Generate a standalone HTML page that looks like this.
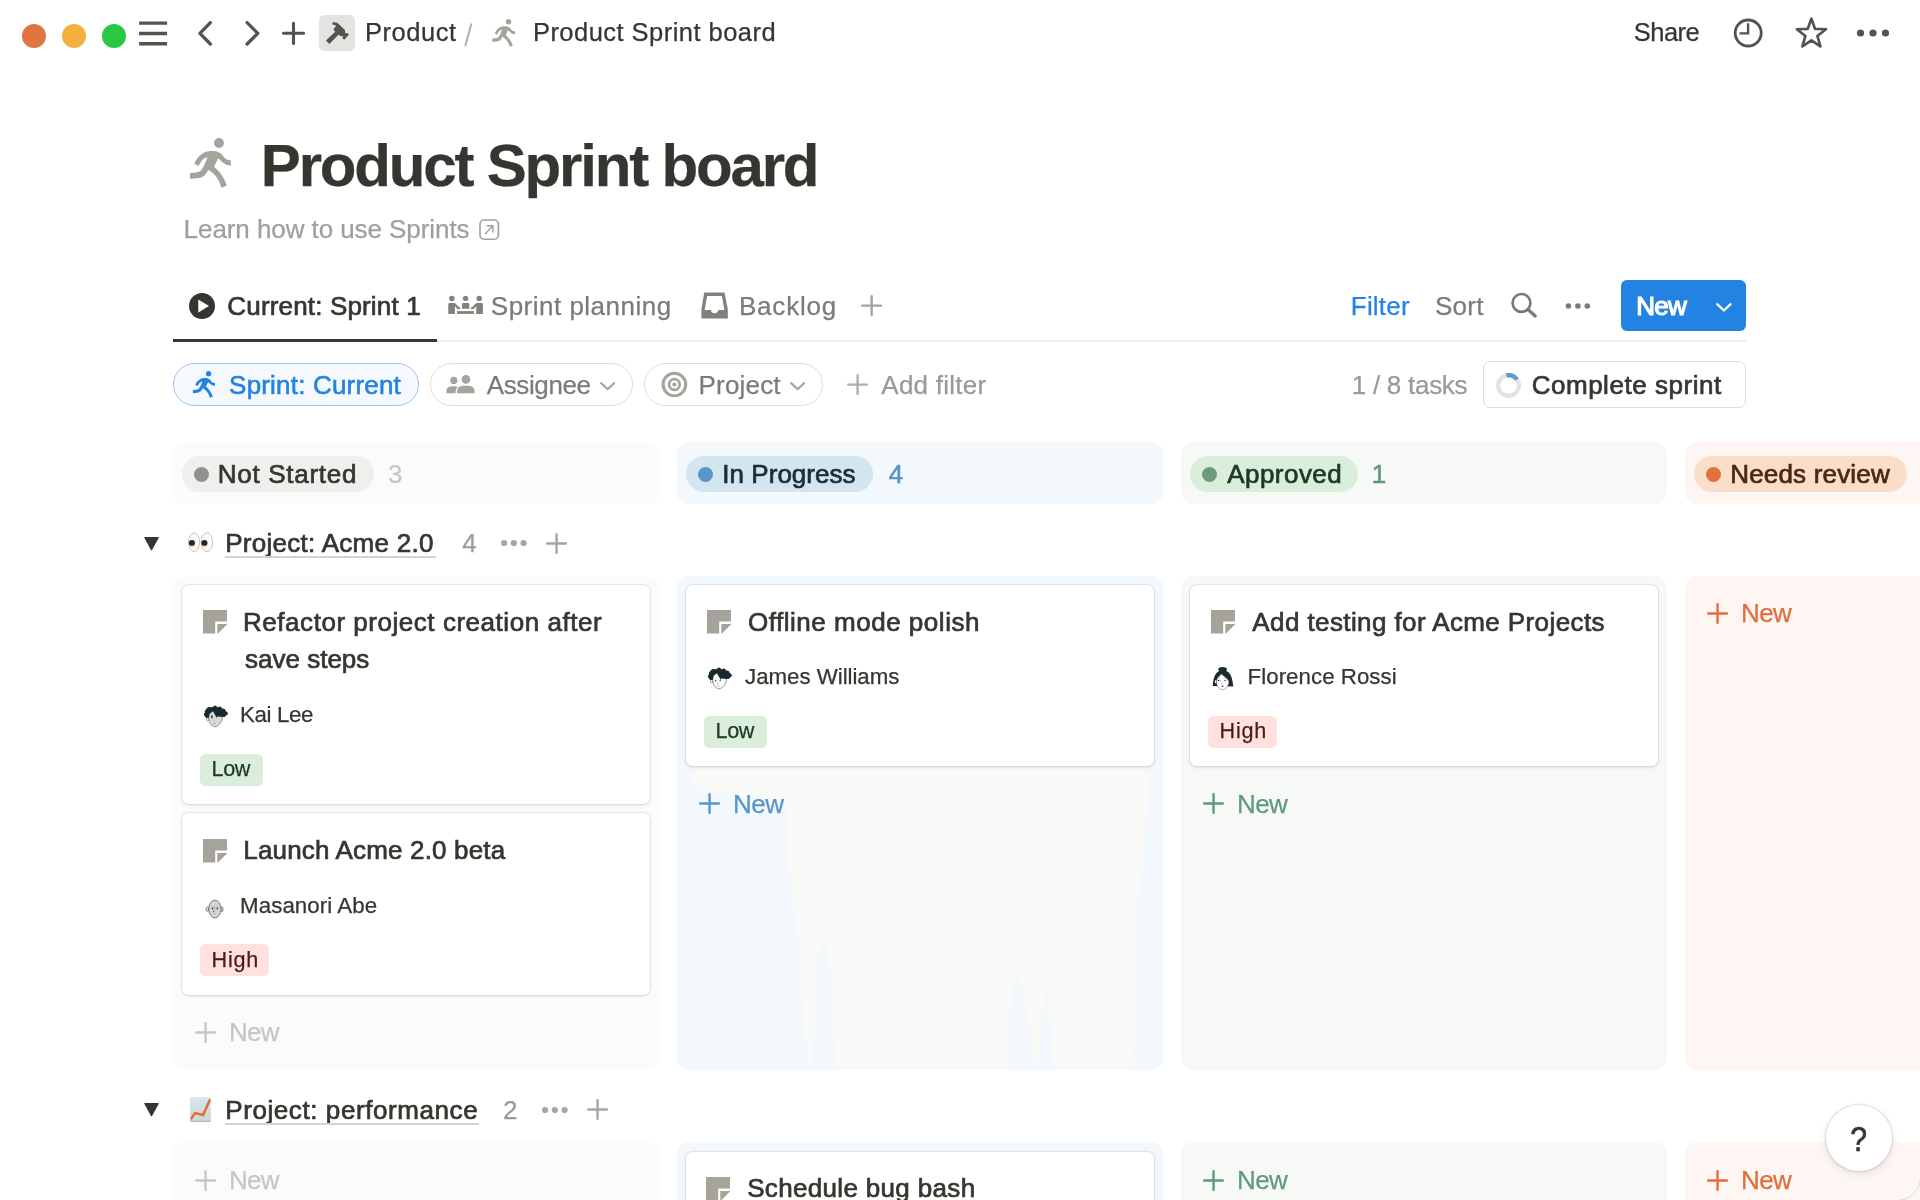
<!DOCTYPE html>
<html lang="en">
<head>
<meta charset="utf-8">
<title>Product Sprint board</title>
<style>
*{box-sizing:border-box;margin:0;padding:0}
html,body{width:1920px;height:1200px;overflow:hidden;background:#fff}
body{font-family:"Liberation Sans",sans-serif;color:#37352f;position:relative}
#app{position:absolute;left:0;top:0;width:1920px;height:1200px;overflow:hidden;background:#fff;will-change:transform}
.a{position:absolute}
.t{position:absolute;white-space:nowrap;line-height:1;-webkit-text-stroke:0.250px currentColor}
svg{position:absolute;overflow:visible}
/* top bar */
.tl{position:absolute;width:24px;height:24px;border-radius:50%;top:24px}
.tb{font-size:25.500px;color:#37352f}
/* columns */
.colh{position:absolute;top:442px;height:62px;width:486px;border-radius:12px}
.colb{position:absolute;width:486px;border-radius:12px}
.pill{position:absolute;top:456px;height:36px;border-radius:18px}
.dot{position:absolute;width:15px;height:15px;border-radius:50%;top:11px;left:12px}
.pt{font-size:26px;top:5px;left:37px;font-weight:400;-webkit-text-stroke:0.700px currentColor}
.cnt{font-size:26px;top:461px}
.card{position:absolute;width:468.250px;background:#fff;border-radius:7px;box-shadow:0 0 0 1.200px rgba(15,15,15,0.070),0 2px 3.500px rgba(15,15,15,0.070)}
.ct{font-size:26px;-webkit-text-stroke:0.700px currentColor;letter-spacing:0.45px}
.nm{font-size:22.300px}
.tag{position:absolute;height:32px;border-radius:5.500px;font-size:21.600px}
.low{background:#dbeddb;color:#1c3829}
.high{background:#ffe2dd;color:#4e1a14}
.nw{font-size:26px}
.gh{font-size:26px;-webkit-text-stroke:0.700px currentColor}
</style>
</head>
<body>
<div id="app">

<svg width="0" height="0" style="position:absolute"><defs>
<symbol id="runner" viewBox="0 0 41 50"><circle cx="29" cy="5" r="4.900" fill="currentColor"/><path fill="currentColor" d="M4.35 25.84C4.93 24.80 6.29 21.46 7.87 19.61C9.45 17.76 11.75 15.82 13.82 14.74C15.90 13.66 18.15 13.34 20.32 13.12C22.49 12.89 25.01 12.93 26.82 13.39C28.62 13.84 29.70 14.60 31.15 15.82C32.59 17.04 33.85 19.61 35.48 20.70C37.10 21.78 39.99 22.05 40.89 22.32L40.89 27.46C40.08 27.28 37.46 26.97 36.02 26.38C34.58 25.79 33.54 24.98 32.23 23.94C30.92 22.91 28.85 20.79 28.17 20.15L24.11 28.82C25.10 29.81 28.35 32.61 30.06 34.77C31.78 36.94 33.27 39.69 34.40 41.81C35.52 43.93 36.43 46.55 36.83 47.50L31.42 49.66C30.92 48.44 29.75 44.65 28.44 42.35C27.13 40.05 25.24 37.61 23.57 35.85C21.90 34.10 19.28 32.47 18.42 31.79L18.42 31.79C17.84 32.65 16.30 35.63 14.91 36.94C13.51 38.25 12.51 39.01 10.03 39.64C7.55 40.28 1.69 40.55 0.02 40.73L0.02 35.04C1.51 34.82 6.83 34.55 8.95 33.69C11.07 32.83 11.66 31.43 12.74 29.90C13.82 28.37 14.63 26.33 15.45 24.49C16.26 22.64 17.25 19.75 17.61 18.80L17.61 18.80C16.71 19.34 13.69 20.51 12.20 22.05C10.71 23.58 9.27 27.01 8.68 28.00Z"/></symbol>
<symbol id="pg" viewBox="0 0 24 24"><path fill="currentColor" d="M0 0H24V11.600H12.200V23.600H0Z"/><path fill="currentColor" d="M14.300 13.900H24V14.600L15 23.600H14.300Z"/></symbol>
<symbol id="plus" viewBox="0 0 22 22"><path d="M11 1.300V20.700M1.300 11H20.700" stroke="currentColor" stroke-width="2.500" stroke-linecap="round" fill="none"/></symbol>
<symbol id="chev" viewBox="0 0 16 9"><path d="M1.200 1.200L8 7.600L14.800 1.200" stroke="currentColor" stroke-width="2.300" fill="none" stroke-linecap="round" stroke-linejoin="round"/></symbol>
</defs></svg>
<!-- TOPBAR -->
<div id="topbar">
<div class="tl" style="left:22px;background:#e07542"></div>
<div class="tl" style="left:62px;background:#f2b13f"></div>
<div class="tl" style="left:102px;background:#28c840"></div>
<svg style="left:0;top:0" width="1920" height="70" viewBox="0 0 1920 70" fill="none" stroke="#55534e" stroke-width="3" stroke-linecap="round" stroke-linejoin="round">
<!-- hamburger -->
<path d="M139.100 23.100H167.100 M139.100 33.500H167.100 M139.100 43.700H167.100" stroke-linecap="butt" stroke-width="3.400"/>
<!-- back / forward -->
<path d="M210.400 22.600L199.900 33.300L210.400 44" stroke-width="3.300"/>
<path d="M247.100 22.600L257.800 33.300L247.100 44" stroke-width="3.300"/>
<!-- plus -->
<path d="M293.500 23.300V43.400M283.500 33.300H303.600" stroke-width="3.100"/>
<!-- hammer box -->
<rect x="319" y="15" width="36" height="36" rx="5.500" fill="#e4e3e1" stroke="none"/>
<g id="hammer" fill="#55534e" stroke="none"><path d="M325.930 40.450L329.300 43.930L338.470 34.840L340.670 35.940L342.870 36.300L342.690 38.500L344.340 39.790L348.920 34.470L347.270 33L345.250 33.190L344.890 30.070L338.470 23.650Q336.500 21.900 332.420 22.300L332.420 24.380Q335 24.500 336.270 26.030L333.340 29.330L334.440 30.430L334.990 31.900Z"/></g>
<!-- clock -->
<circle cx="1748.200" cy="33" r="13" stroke-width="2.800"/>
<path d="M1748.100 24.300V33.400H1740.500" stroke-width="2.400" stroke-linecap="round" stroke-linejoin="miter"/>
<!-- star -->
<path d="M1811.40 18.70L1815.10 28.90L1825.95 29.27L1817.39 35.95L1820.39 46.38L1811.40 40.30L1802.41 46.38L1805.41 35.95L1796.85 29.27L1807.70 28.90Z" stroke-width="2.700" stroke-linejoin="round"/>
<!-- dots -->
<g fill="#55534e" stroke="none"><circle cx="1860.500" cy="33" r="3.600"/><circle cx="1873" cy="33" r="3.600"/><circle cx="1885.500" cy="33" r="3.600"/></g>
</svg>
<span class="t tb" id="tbp" style="left:365.03px;top:20.02px;letter-spacing:0.542px">Product</span>
<svg style="left:460px;top:20px" width="16" height="30" viewBox="460 20 16 30"><path d="M471.400 23.400L465.300 46" stroke="#b3b2ae" stroke-width="2.100" fill="none"/></svg>
<span class="t tb" id="tbt" style="left:532.93px;top:20.02px;letter-spacing:0.466px">Product Sprint board</span>
<span class="t tb" id="tbs" style="left:1633.73px;top:20.02px;letter-spacing:-0.503px">Share</span>
<svg id="run1" style="left:491.500px;top:18.500px;color:#a6a39b" width="23.500" height="28"><use href="#runner"/></svg>
</div>

<!-- TITLE -->
<div id="title">
<svg style="left:190px;top:138px;color:#a6a39b" width="41" height="50"><use href="#runner"/></svg>
<span class="t" id="h1" style="left:260.83px;top:135.61px;font-size:60px;font-weight:700;letter-spacing:-2.174px;color:#37352f">Product Sprint board</span>
<span class="t" id="sub" style="left:183.62px;top:215.79px;font-size:26px;letter-spacing:-0.072px;color:#a09f9b">Learn how to use Sprints</span>
<svg style="left:479px;top:219px" width="21" height="22" viewBox="479 219 21 22" fill="none" stroke="#a09f9b" stroke-width="1.600"><rect x="480" y="220" width="18.400" height="19.200" rx="4.200"/><path d="M485.500 233.500L492.500 226.300M487 225.800H492.900V232" stroke-linecap="round" stroke-linejoin="round" stroke-width="1.500"/></svg>
</div>

<!-- TABS -->
<div id="tabs">
<div class="a" style="left:173px;top:340px;width:1573px;height:2px;background:#ececea"></div>
<div class="a" style="left:173px;top:338.800px;width:264px;height:3.200px;background:#37352f"></div>
<!-- play icon -->
<svg style="left:188.500px;top:292.500px" width="26" height="26" viewBox="0 0 26 26"><circle cx="13" cy="13" r="13" fill="#37352f"/><path d="M9.300 6.600L20 13L9.300 19.400Z" fill="#fff"/></svg>
<span class="t" id="tab1" style="left:227.35px;top:292.99px;font-size:26px;letter-spacing:0.157px;-webkit-text-stroke:0.700px currentColor">Current: Sprint 1</span>
<!-- sprint planning icon -->
<svg style="left:444px;top:290px" width="44" height="30" viewBox="444 290 44 30" fill="#83817c"><circle cx="451.900" cy="298.400" r="2.750"/><circle cx="465.550" cy="298.400" r="2.650"/><circle cx="479.250" cy="298.400" r="2.750"/><path d="M448.250 304.300Q448.250 303 449.600 303H454Q455.200 303 456 303.900L458.200 306.500Q458.900 307.200 459.700 307.200Q460.500 307.300 460.300 308.300Q460 309.400 458.700 309.300Q457.600 309.200 456.800 308.300L454.900 306.300V313.900H448.250Z"/><path d="M482.900 304.300 Q482.900 303.000 481.550 303.000 H477.150 Q475.950 303.000 475.150 303.900 L472.950 306.500 Q472.250 307.200 471.450 307.200 Q470.650 307.300 470.850 308.300 Q471.150 309.400 472.450 309.300 Q473.550 309.200 474.350 308.300 L476.250 306.300 V313.900 H482.900 Z"/><path d="M462 304.200Q462 303 463.300 303H468Q469.250 303 469.250 304.200V308.750H462Z"/><rect x="457" y="311.100" width="16.900" height="2.800"/></svg>
<span class="t" id="tab2" style="left:490.83px;top:292.99px;font-size:26px;color:#7d7b76;letter-spacing:0.490px">Sprint planning</span>
<!-- backlog icon -->
<svg style="left:696px;top:288px" width="38" height="36" viewBox="696 288 38 36" fill="#83817c"><path fill-rule="evenodd" d="M704.250 292.500H724.500L727.800 309.300V318.600H701.400V309.300Z M707.100 295.950H721.950L724.350 310.050H718.350Q717.600 313.300 714.600 313.300Q711.600 313.300 710.850 310.050H704.700Z"/></svg>
<span class="t" id="tab3" style="left:738.93px;top:292.99px;font-size:26px;color:#7d7b76;letter-spacing:0.819px">Backlog</span>
<svg style="left:860.800px;top:294.600px;color:#a6a39b" width="21.300" height="21.300"><use href="#plus"/></svg>
<span class="t" id="filter" style="left:1350.83px;top:292.99px;font-size:26px;color:#2383e2;letter-spacing:0.186px">Filter</span>
<span class="t" id="sort" style="left:1435.03px;top:292.99px;font-size:26px;color:#7d7b76;letter-spacing:0.230px">Sort</span>
<svg style="left:1506px;top:288px" width="34" height="34" viewBox="1506 288 34 34" fill="none" stroke="#7b7974"><circle cx="1521.500" cy="302.900" r="8.900" stroke-width="2.700"/><path d="M1528.200 309.800L1535.200 316" stroke-width="3.300" stroke-linecap="round"/></svg>
<svg style="left:1565px;top:301.500px" width="26" height="8" viewBox="0 0 26 8" fill="#7b7974"><circle cx="3.400" cy="4" r="2.800"/><circle cx="12.900" cy="4" r="2.800"/><circle cx="22.300" cy="4" r="2.800"/></svg>
<div class="a" style="left:1621px;top:280px;width:125px;height:51px;border-radius:6px;background:#2383e2"></div>
<span class="t" id="newb" style="left:1636.20px;top:292.89px;font-size:26px;color:#fff;-webkit-text-stroke:1.200px currentColor;letter-spacing:-0.718px">New</span>
<svg style="left:1716.100px;top:302.700px;color:#fff" width="15.800" height="8.900"><use href="#chev"/></svg>
</div>

<!-- FILTERS -->
<div id="filters">
<div class="a" style="left:173px;top:363px;width:245.800px;height:42.700px;border-radius:22px;background:#f5f9fe;border:1.300px solid #9fc6f0"></div>
<svg style="left:191.500px;top:371px;color:#2383e2" width="24" height="27"><use href="#runner"/></svg>
<span class="t" id="f1" style="left:229.10px;top:371.60px;font-size:26px;color:#2383e2;-webkit-text-stroke:0.600px currentColor;letter-spacing:0.190px">Sprint: Current</span>
<div class="a" style="left:430.200px;top:363px;width:202.500px;height:42.700px;border-radius:22px;background:#fff;border:1.300px solid #dddcd9"></div>
<svg style="left:440px;top:370px" width="40" height="28" viewBox="440 370 40 28" fill="#a6a39b"><circle cx="453.800" cy="380.400" r="3.600"/><path d="M446.400 393.200V391.500Q446.400 386.500 451.500 386.300H455.500Q456.800 386.300 457.600 386.900Q455.600 388.800 455.600 391.500V393.200Z"/><circle cx="466" cy="379.400" r="4.300"/><path d="M457 393.200V391.800Q457 385.800 463 385.800H469Q474.600 385.800 474.600 391.800V393.200Z"/></svg>
<span class="t" id="f2" style="left:486.73px;top:371.60px;font-size:26px;color:#7d7b76;letter-spacing:-0.378px">Assignee</span>
<svg style="left:599.500px;top:381.700px;color:#a9a6a0" width="15.300" height="8.600"><use href="#chev"/></svg>
<div class="a" style="left:644.300px;top:363px;width:178.500px;height:42.700px;border-radius:22px;background:#fff;border:1.300px solid #dddcd9"></div>
<svg style="left:658px;top:368px" width="34" height="34" viewBox="658 368 34 34" fill="none" stroke="#a6a39b"><circle cx="674.400" cy="384.500" r="11.300" stroke-width="3.100"/><circle cx="674.400" cy="384.500" r="5.300" stroke-width="2.700"/><circle cx="674.400" cy="384.500" r="2.100" fill="#a6a39b" stroke="none"/></svg>
<span class="t" id="f3" style="left:698.53px;top:371.60px;font-size:26px;color:#7d7b76;letter-spacing:0.192px">Project</span>
<svg style="left:790.400px;top:381.700px;color:#a9a6a0" width="15.300" height="8.600"><use href="#chev"/></svg>
<svg style="left:846.800px;top:373.800px;color:#b3b0aa" width="21.200" height="21.200"><use href="#plus"/></svg>
<span class="t" id="f4" style="left:881.33px;top:371.60px;font-size:26px;color:#9b9994;letter-spacing:0.234px">Add filter</span>
<span class="t" id="f5" style="left:1351.83px;top:371.60px;font-size:26px;color:#9b9994;letter-spacing:-0.275px">1 / 8 tasks</span>
<div class="a" style="left:1483.200px;top:361px;width:262.800px;height:46.800px;border-radius:7px;background:#fff;border:1.400px solid #dddcd9"></div>
<svg style="left:1496px;top:372.800px" width="25" height="25" viewBox="0 0 25 25" fill="none" stroke-width="4.200"><circle cx="12.500" cy="12.500" r="10.400" stroke="#e4e3e1"/><path d="M10.340 2.330A10.400 10.400 0 0 1 21.020 6.530" stroke="#5b9ad2"/></svg>
<span class="t" id="f6" style="left:1531.65px;top:371.60px;font-size:26px;color:#37352f;-webkit-text-stroke:0.700px currentColor;letter-spacing:0.532px">Complete sprint</span>
</div>

<!-- BOARD -->
<div id="board">
<div class="colh" style="left:173px;background:#fbfbfa"></div>
<div class="colh" style="left:677px;background:#f3f8fc"></div>
<div class="colh" style="left:1181px;background:#f6f9f6"></div>
<div class="colh" style="left:1685px;background:#fdf6f3"></div>
<div class="colb" style="left:173px;top:576px;height:493.500px;background:#fbfbfa"></div>
<div class="colb" style="left:173px;top:1142px;height:200px;background:#fbfbfa"></div>
<div class="colb" style="left:677px;top:576px;height:493.500px;background:#f3f8fc"></div>
<div class="colb" style="left:677px;top:1142px;height:200px;background:#f3f8fc"></div>
<div class="colb" style="left:1181px;top:576px;height:493.500px;background:#f6f9f6"></div>
<div class="colb" style="left:1181px;top:1142px;height:200px;background:#f6f9f6"></div>
<div class="colb" style="left:1685px;top:576px;height:493.500px;background:#fdf6f3"></div>
<div class="colb" style="left:1685px;top:1142px;height:200px;background:#fdf6f3"></div>
<svg id="dz" style="left:677px;top:760px" width="486" height="310" viewBox="677 760 486 310"><path fill="#f9f9f8" d="M693 767H1150L1147.300 813L1142 867L1136.700 920L1134 973L1133.200 1069.500H1051.300L1051.300 1026.700L1046 978.700L1040.700 1026.700L1038 1069.500H1034L1030 1026.700L1024.700 1000L1015.300 965.300L1011.300 1000L1010 1026.700V1069.500H836.700L834 1026.700L830 973L824.700 922.700L815.300 973L814 1026.700L811.300 1069.500H807.300L804.700 1026.700L800.700 973L796.100 920L792.700 893.300L788.100 866.700V802L740 796L693 790Z"/></svg>
<div class="pill" style="left:182px;width:191.5px;background:#f0efee"><div class="dot" style="background:#91918e"></div><span class="t pt" id="p1" style="left:35.76px;top:4.91px;color:#37352f;letter-spacing:0.715px">Not Started</span></div>
<span class="t cnt" id="c1" style="left:388.12px;color:#c7c6c4;letter-spacing:0.000px">3</span>
<div class="pill" style="left:686px;width:187px;background:#d3e5ef"><div class="dot" style="background:#5a96c8"></div><span class="t pt" id="p2" style="left:36.35px;top:4.91px;color:#1a2e3a;letter-spacing:0.025px">In Progress</span></div>
<span class="t cnt" id="c2" style="left:888.80px;color:#5596cb;letter-spacing:0.000px;-webkit-text-stroke:0.600px currentColor">4</span>
<div class="pill" style="left:1190px;width:168px;background:#dbeddb"><div class="dot" style="background:#6c9b7d"></div><span class="t pt" id="p3" style="left:37.26px;top:4.80px;color:#1c3829;letter-spacing:0.451px">Approved</span></div>
<span class="t cnt" id="c3" style="left:1371.80px;color:#5f9b7a;letter-spacing:0.000px;-webkit-text-stroke:0.600px currentColor">1</span>
<div class="pill" style="left:1694px;width:213px;background:#fadec9"><div class="dot" style="background:#e0733d"></div><span class="t pt" id="p4" style="left:36.26px;top:4.91px;color:#49290e;letter-spacing:0.179px">Needs review</span></div>
<svg style="left:144.400px;top:537.100px" width="15" height="13.300" viewBox="0 0 15 13.300"><path d="M1 0H14Q15.300 0 14.600 1.100L8.200 12.700Q7.500 13.800 6.800 12.700L0.400 1.100Q-0.300 0 1 0Z" fill="#37352f"/></svg>
<svg id="eyes" style="left:186px;top:530px" width="30" height="24" viewBox="186 530 30 24"><ellipse cx="194.050" cy="542.200" rx="5.600" ry="9.400" fill="#fafaf9" stroke="#bdbbb6" stroke-width="0.800"/><ellipse cx="206.850" cy="542.200" rx="5.800" ry="9.400" fill="#fafaf9" stroke="#bdbbb6" stroke-width="0.800"/><circle cx="191.900" cy="543.100" r="3.100" fill="#2b2622"/><circle cx="204.400" cy="543.100" r="3.100" fill="#2b2622"/><path d="M189.600 545.200A3.100 3.100 0 0 0 194.400 545Z" fill="#c8621f"/><path d="M202.100 545.200A3.100 3.100 0 0 0 206.900 545Z" fill="#c8621f"/></svg>
<span class="t gh" id="g1" style="left:225.26px;top:530.24px;letter-spacing:0.276px">Project: Acme 2.0</span>
<div class="a" style="left:225px;top:556.300px;width:211px;height:1.300px;background:#d4d3d0"></div>
<span class="t" id="g1c" style="left:462.23px;top:530.24px;font-size:26px;color:#9b9a97;letter-spacing:0.000px">4</span>
<svg style="left:500.650px;top:539.400px" width="26" height="8" viewBox="0 0 26 8" fill="#a8a59f"><circle cx="3.100" cy="4" r="3.100"/><circle cx="12.850" cy="4" r="3.100"/><circle cx="22.600" cy="4" r="3.100"/></svg>
<svg style="left:545.900px;top:532.700px;color:#a8a59f" width="21.100" height="21.100"><use href="#plus"/></svg>
<svg style="left:144.400px;top:1103.100px" width="15" height="13.300" viewBox="0 0 15 13.300"><path d="M1 0H14Q15.300 0 14.600 1.100L8.200 12.700Q7.500 13.800 6.800 12.700L0.400 1.100Q-0.300 0 1 0Z" fill="#37352f"/></svg>
<svg id="chart" style="left:188px;top:1095px" width="26" height="30" viewBox="188 1095 26 30"><defs><linearGradient id="cg" x1="0" y1="0" x2="0" y2="1"><stop offset="0" stop-color="#d9e6ee"/><stop offset="1" stop-color="#c9d8d3"/></linearGradient></defs><rect x="190" y="1097.100" width="20.900" height="24.800" fill="url(#cg)"/><rect x="190" y="1120.700" width="20.900" height="1.200" fill="#bdbab4"/><path d="M190.900 1119.400L195 1113.100L203.100 1115L210 1099.400" fill="none" stroke="#e8693a" stroke-width="2.400" stroke-linejoin="miter"/></svg>
<span class="t gh" id="g2" style="left:225.26px;top:1096.74px;letter-spacing:0.581px">Project: performance</span>
<div class="a" style="left:225px;top:1123.400px;width:253.500px;height:1.300px;background:#d4d3d0"></div>
<span class="t" id="g2c" style="left:503.12px;top:1096.74px;font-size:26px;color:#9b9a97;letter-spacing:0.000px">2</span>
<svg style="left:541.500px;top:1105.900px" width="26" height="8" viewBox="0 0 26 8" fill="#a8a59f"><circle cx="3.100" cy="4" r="3.100"/><circle cx="12.850" cy="4" r="3.100"/><circle cx="22.600" cy="4" r="3.100"/></svg>
<svg style="left:586.800px;top:1099.200px;color:#a8a59f" width="21.100" height="21.100"><use href="#plus"/></svg>
<div class="card" style="left:182px;top:585px;height:219.25px">
<svg style="left:20.599999999999994px;top:25.40px;color:#a6a39b" width="24" height="24"><use href="#pg"/></svg>
<span class="t ct" id="k1t0" style="left:61.06px;top:23.69px;letter-spacing:0.535px">Refactor project creation after</span>
<span class="t ct" id="k1t1" style="left:63.06px;top:60.60px;letter-spacing:0.000px">save steps</span>
<div class="a" style="left:16px;top:115px;width:36px;height:32px"><svg width="36" height="32" viewBox="0 0 36 32" style="left:0;top:0"><ellipse cx="9.700" cy="19" rx="1.300" ry="1.900" fill="#f2f2f1" stroke="#6f6f6d" stroke-width="0.600"/><path d="M11.300 13C10.500 17 10.900 21 11.900 23C13.300 25.600 15.500 26.800 17.100 26.800C19 26.800 21.300 24.800 22.900 22.200C24 20.400 24.700 18.500 24.300 16.500L15 10.500Z" fill="#dbdad8" stroke="#6f6f6d" stroke-width="0.700"/><ellipse cx="13.900" cy="16.800" rx="0.800" ry="1.700" fill="#2b2b2b"/><circle cx="16.100" cy="20.100" r="0.700" fill="#9a9997"/><ellipse cx="16.500" cy="23.300" rx="0.900" ry="0.600" fill="#8f8e8c"/><g fill="#1a2b2f"><polygon points="8.800 8 17 6.500 26.700 9.100 29.600 13.900 26.700 17.100 22 16.800 19.200 16.500 18.700 18.100 17.100 14.900 14.900 11.200 11.500 13.900 10.700 18.100 8 17.600 6.400 14.400"/><circle cx="11.2" cy="8.8" r="1.9"/><circle cx="17.1" cy="7.5" r="1.9"/><circle cx="21.9" cy="8.3" r="1.9"/><circle cx="25.3" cy="10.4" r="1.7"/><circle cx="28" cy="13.3" r="1.8"/><circle cx="8" cy="14.4" r="2.1"/><circle cx="8.8" cy="11.2" r="1.9"/><circle cx="9" cy="16.5" r="1.6"/></g></svg></div>
<span class="t nm" id="k1n" style="left:58.12px;top:118.89px;letter-spacing:-0.395px">Kai Lee</span>
<div class="tag low" style="left:18px;top:169.10px;width:63.1px;height:31.9px"><span class="t" id="k1g" style="left:11.62px;top:4.14px;letter-spacing:-0.434px">Low</span></div>
</div>
<div class="card" style="left:182px;top:813px;height:181.5px">
<svg style="left:20.599999999999994px;top:26.10px;color:#a6a39b" width="24" height="24"><use href="#pg"/></svg>
<span class="t ct" id="k2t0" style="left:61.35px;top:23.91px;letter-spacing:0.162px">Launch Acme 2.0 beta</span>
<div class="a" style="left:16px;top:79px;width:36px;height:32px"><svg width="36" height="32" viewBox="0 0 36 32" style="left:0;top:0"><ellipse cx="9.400" cy="17.200" rx="1.400" ry="2.300" fill="#dcdbd9" stroke="#666" stroke-width="0.700"/><ellipse cx="23.900" cy="17.300" rx="1.300" ry="2.400" fill="#dcdbd9" stroke="#666" stroke-width="0.700"/><ellipse cx="16.900" cy="17" rx="6.200" ry="8.900" fill="#d4d3d1" stroke="#5e5e5c" stroke-width="0.800"/><path d="M13 15H15.300M18 15H20.500" stroke="#888" stroke-width="0.500"/><path d="M16.300 14V19.500" stroke="#8a8a88" stroke-width="0.600"/><circle cx="14.400" cy="16.600" r="0.800" fill="#2b2b2b"/><circle cx="19.300" cy="16.500" r="0.800" fill="#2b2b2b"/><circle cx="15.500" cy="19.400" r="0.500" fill="#444"/><path d="M15 21.300Q16.300 23 17.700 21.300" stroke="#888" stroke-width="0.600" fill="#e6e5e3"/></svg></div>
<span class="t nm" id="k2n" style="left:58.12px;top:81.64px;letter-spacing:0.053px">Masanori Abe</span>
<div class="tag high" style="left:18px;top:131.40px;width:69px;height:32px"><span class="t" id="k2g" style="left:11.62px;top:4.94px;letter-spacing:0.783px">High</span></div>
</div>
<div class="card" style="left:686px;top:585px;height:180.5px">
<svg style="left:20.600000000000023px;top:25.40px;color:#a6a39b" width="24" height="24"><use href="#pg"/></svg>
<span class="t ct" id="k3t0" style="left:61.96px;top:23.69px;letter-spacing:0.520px">Offline mode polish</span>
<div class="a" style="left:16px;top:77px;width:36px;height:32px"><svg width="36" height="32" viewBox="0 0 36 32" style="left:0;top:0"><ellipse cx="9.700" cy="19" rx="1.300" ry="1.900" fill="#f2f2f1" stroke="#6f6f6d" stroke-width="0.600"/><path d="M11.300 13C10.500 17 10.900 21 11.900 23C13.300 25.600 15.500 26.800 17.100 26.800C19 26.800 21.300 24.800 22.900 22.200C24 20.400 24.700 18.500 24.300 16.500L15 10.500Z" fill="#ffffff" stroke="#6f6f6d" stroke-width="0.700"/><ellipse cx="13.700" cy="18.800" rx="1" ry="0.700" fill="#555" transform="rotate(-30 13.700 18.800)"/><ellipse cx="18.300" cy="18.500" rx="1" ry="0.700" fill="#666" transform="rotate(-30 18.300 18.500)"/><circle cx="15.600" cy="21.300" r="0.600" fill="#8a8a88"/><path d="M14.600 23.300L16.400 24.200L17.600 23.300" stroke="#777" stroke-width="0.500" fill="none"/><g fill="#1a2b2f"><polygon points="8.800 8 17 6.500 26.700 9.100 29.600 13.900 26.700 17.100 22 16.800 19.200 16.500 18.700 18.100 17.100 14.900 14.900 11.200 11.500 13.900 10.700 18.100 8 17.600 6.400 14.400"/><circle cx="11.2" cy="8.8" r="1.9"/><circle cx="17.1" cy="7.5" r="1.9"/><circle cx="21.9" cy="8.3" r="1.9"/><circle cx="25.3" cy="10.4" r="1.7"/><circle cx="28" cy="13.3" r="1.8"/><circle cx="8" cy="14.4" r="2.1"/><circle cx="8.8" cy="11.2" r="1.9"/><circle cx="9" cy="16.5" r="1.6"/></g></svg></div>
<span class="t nm" id="k3n" style="left:59.12px;top:80.89px;letter-spacing:-0.042px">James Williams</span>
<div class="tag low" style="left:18px;top:131.25px;width:63px;height:31.6px"><span class="t" id="k3g" style="left:11.62px;top:4.22px;letter-spacing:-0.384px">Low</span></div>
</div>
<div class="card" style="left:1190px;top:585px;height:180.5px">
<svg style="left:20.59999999999991px;top:25.40px;color:#a6a39b" width="24" height="24"><use href="#pg"/></svg>
<span class="t ct" id="k4t0" style="left:62.35px;top:23.69px;letter-spacing:0.397px">Add testing for Acme Projects</span>
<div class="a" style="left:15px;top:77px;width:36px;height:32px"><svg width="36" height="32" viewBox="0 0 36 32" style="left:0;top:0"><path d="M7.700 23.900C8.300 15.500 10.500 10.500 14.300 9L13.300 7.800Q13 5.200 17.500 5.100Q22 5.200 22 7.800L21.300 9C25.500 10.500 27.500 16 28.300 24.600Z" fill="#1a2b2f"/><path d="M16.500 12C14 14.500 11.500 16 11.500 20C11.500 24.500 14.500 27.700 17.500 27.700C20.500 27.700 23.500 24.500 24 20C23.500 17 20 15.500 16.500 12Z" fill="#fff" stroke="#555" stroke-width="0.500"/><ellipse cx="10.600" cy="19.700" rx="0.700" ry="1.600" fill="#fff"/><circle cx="13.600" cy="18.500" r="0.800" fill="#1a2b2f"/><ellipse cx="15.200" cy="18.600" rx="0.700" ry="0.500" fill="#999"/><ellipse cx="20.200" cy="18.400" rx="1.300" ry="0.600" fill="#777" transform="rotate(-20 20.200 18.400)"/><path d="M14 16.500L15 16.200M19 16.200L20.500 16.600" stroke="#999" stroke-width="0.500"/><circle cx="16.700" cy="21.300" r="0.600" fill="#999"/><ellipse cx="17.500" cy="24.200" rx="1.200" ry="0.600" fill="#333" transform="rotate(-20 17.500 24.200)"/></svg></div>
<span class="t nm" id="k4n" style="left:57.62px;top:80.89px;letter-spacing:0.024px">Florence Rossi</span>
<div class="tag high" style="left:18px;top:131.25px;width:69px;height:31.6px"><span class="t" id="k4g" style="left:11.62px;top:4.22px;letter-spacing:0.783px">High</span></div>
</div>
<div class="card" style="left:686px;top:1151.600px;height:181px">
<svg style="left:20.400px;top:25.500px;color:#a6a39b" width="24" height="24"><use href="#pg"/></svg>
<span class="t ct" id="k5t0" style="left:61.15px;top:23.40px;letter-spacing:0.333px">Schedule bug bash</span>
</div>
<svg style="left:195px;top:1021.6px;color:#c6c6c4" width="21.100" height="21.100"><use href="#plus"/></svg><span class="t nw" id="n1" style="left:229.03px;top:1018.69px;color:#c6c6c4;letter-spacing:-0.693px">New</span>
<svg style="left:698.9px;top:792.8px;color:#5596cb" width="21.100" height="21.100"><use href="#plus"/></svg><span class="t nw" id="n2" style="left:732.93px;top:790.69px;color:#5596cb;letter-spacing:-0.493px">New</span>
<svg style="left:1202.8px;top:792.8px;color:#5f9b7a" width="21.100" height="21.100"><use href="#plus"/></svg><span class="t nw" id="n3" style="left:1237.03px;top:790.69px;color:#5f9b7a;letter-spacing:-0.593px">New</span>
<svg style="left:1706.9px;top:602.8px;color:#e06e3c" width="21.100" height="21.100"><use href="#plus"/></svg><span class="t nw" id="n4" style="left:1740.93px;top:599.89px;color:#e06e3c;letter-spacing:-0.543px">New</span>
<svg style="left:195px;top:1169.9px;color:#c6c6c4" width="21.100" height="21.100"><use href="#plus"/></svg><span class="t nw" id="n5" style="left:229.03px;top:1166.99px;color:#c6c6c4;letter-spacing:-0.693px">New</span>
<svg style="left:1202.8px;top:1169.9px;color:#5f9b7a" width="21.100" height="21.100"><use href="#plus"/></svg><span class="t nw" id="n6" style="left:1237.03px;top:1166.99px;color:#5f9b7a;letter-spacing:-0.593px">New</span>
<svg style="left:1706.9px;top:1169.9px;color:#e06e3c" width="21.100" height="21.100"><use href="#plus"/></svg><span class="t nw" id="n7" style="left:1740.93px;top:1166.99px;color:#e06e3c;letter-spacing:-0.543px">New</span>
<div class="a" id="help" style="left:1826px;top:1105px;width:66px;height:66px;border-radius:50%;background:#fff;box-shadow:0 0 0 1.500px rgba(15,15,15,0.08),0 3px 8px rgba(15,15,15,0.10)"></div>
<span class="t" id="q" style="left:1849px;top:1121px;transform:scaleX(0.860);font-size:35px;color:#37352f;-webkit-text-stroke:0.700px currentColor">?</span>
</div>

<svg style="left:1890px;top:1170px" width="30" height="30" viewBox="1890 1170 30 30"><path d="M1920 1179A21 21 0 0 1 1899 1200" fill="none" stroke="#dededc" stroke-width="1"/></svg>
</div>
</body>
</html>
